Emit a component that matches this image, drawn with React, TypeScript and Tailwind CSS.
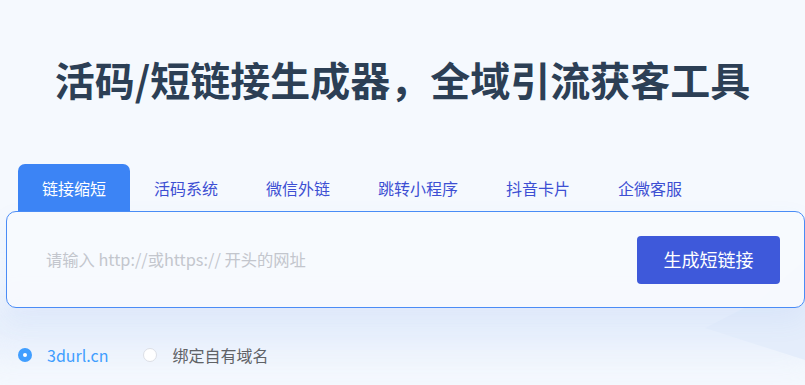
import { useState } from "react";

const TABS = ["链接缩短", "活码系统", "微信外链", "跳转小程序", "抖音卡片", "企微客服"];

const FONT = { fontFamily: '"Noto Sans CJK SC", "Noto Sans", sans-serif' };

export default function App() {
  const [active, setActive] = useState(0);
  const [domain, setDomain] = useState(0);

  return (
    <div className="relative h-[385px] w-full overflow-hidden bg-[#f5f9fe]" style={FONT}>
      {/* soft background shapes */}
      <div className="pointer-events-none absolute inset-0 z-0">
        <div className="absolute top-[300px] left-[-40px] h-[50px] w-[880px] rounded-full bg-[#e3ecfb] blur-[22px]" />
        <svg className="absolute top-0 left-0" width="805" height="385">
          <polygon points="805,260 760,300 705,328 805,360" fill="#e4edfb" />
        </svg>
      </div>

      <div className="relative z-10">
        <h1 className="pt-[54px] text-center text-[40px] leading-[50px] font-bold text-[#2c3f55]">
          活码/短链接生成器，全域引流获客工具
        </h1>

        <nav className="mt-[60px] ml-[18px] flex h-[47px]">
          {TABS.map((tab, i) => (
            <button
              key={tab}
              onClick={() => setActive(i)}
              className={
                i === active
                  ? "rounded-t-[7px] bg-[#3c84f5] px-6 text-[16px] text-white"
                  : "px-6 text-[16px] text-[#3d4fd3]"
              }
            >
              {tab}
            </button>
          ))}
        </nav>

        <div className="ml-[6px] flex h-[97px] w-[799px] items-center justify-between rounded-[10px] border border-[#4a8cf6] bg-[#f7fafe]/90 pr-[24px] pl-[39px] shadow-[0_12px_28px_rgba(90,140,230,0.08)]">
          <input
            className="w-[500px] bg-transparent text-[16.3px] text-[#333] outline-none placeholder:text-[#c3c6cd]"
            placeholder="请输入 http://或https:// 开头的网址"
          />
          <button className="h-[48px] w-[143px] rounded-[4px] bg-[#3e59da] text-[18px] text-white">
            生成短链接
          </button>
        </div>

        <div className="mt-[37px] ml-[18px] flex h-[20px] items-center text-[16px]">
          <label className="flex cursor-pointer items-center" onClick={() => setDomain(0)}>
            <span
              className={
                domain === 0
                  ? "flex h-[14px] w-[14px] items-center justify-center rounded-full bg-[#409eff]"
                  : "h-[14px] w-[14px] rounded-full border border-[#dcdfe6] bg-white"
              }
            >
              {domain === 0 && <span className="h-[4px] w-[4px] rounded-full bg-white" />}
            </span>
            <span className={domain === 0 ? "ml-[15px] text-[#409eff]" : "ml-[15px] text-[#606266]"}>3durl.cn</span>
          </label>
          <label className="ml-[35px] flex cursor-pointer items-center" onClick={() => setDomain(1)}>
            <span
              className={
                domain === 1
                  ? "flex h-[14px] w-[14px] items-center justify-center rounded-full bg-[#409eff]"
                  : "h-[14px] w-[14px] rounded-full border border-[#dcdfe6] bg-white"
              }
            >
              {domain === 1 && <span className="h-[4px] w-[4px] rounded-full bg-white" />}
            </span>
            <span className={domain === 1 ? "ml-[15px] text-[#409eff]" : "ml-[15px] text-[#606266]"}>绑定自有域名</span>
          </label>
        </div>
      </div>
    </div>
  );
}
